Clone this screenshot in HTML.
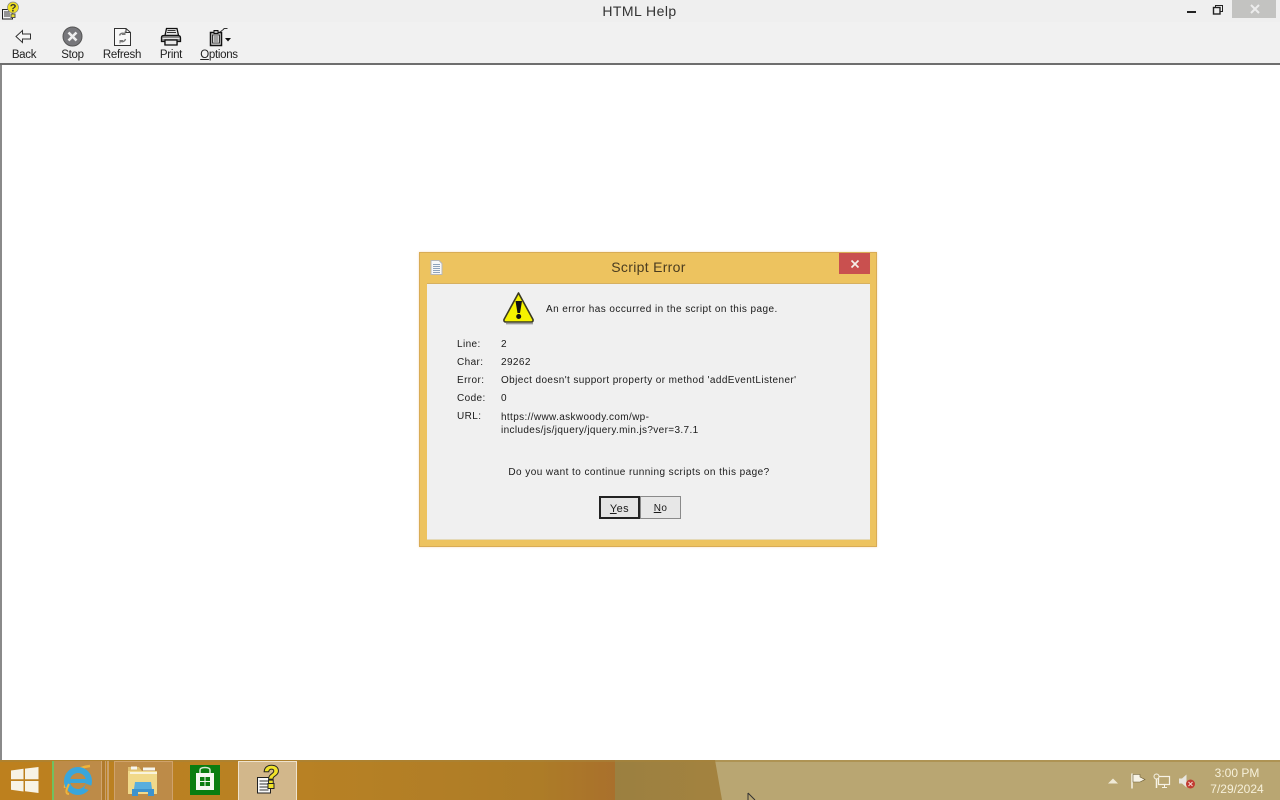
<!DOCTYPE html>
<html><head><meta charset="utf-8"><title>HTML Help</title>
<style>
html,body{margin:0;padding:0;width:1280px;height:800px;overflow:hidden;background:#fff;font-family:"Liberation Sans",Arial,sans-serif;color:#111}
.a{position:absolute;white-space:nowrap}
.t{font-size:11.5px;line-height:14px;color:#222;letter-spacing:-.3px}
.d{font-size:10px;line-height:12px;color:#1a1a1a;letter-spacing:.4px}
u{text-underline-offset:1px}
svg{position:absolute;overflow:visible}
</style></head><body>
<div class="a" style="left:0;top:0;width:1280px;height:22px;background:#efefef"></div>
<div class="a" style="left:0;top:22px;width:1280px;height:42px;background:#f1f1f1"></div>
<div class="a" style="left:0;top:63px;width:1280px;height:2px;background:#6e6e6e"></div>
<div class="a" style="left:0;top:65px;width:2px;height:695px;background:#8a8a8a"></div>
<div class="a" style="left:0;top:3px;width:1279px;text-align:center;font-size:14px;line-height:16px;color:#333;letter-spacing:.45px">HTML Help</div>

<!-- app icon -->
<svg style="left:1px;top:2px" width="18" height="18" viewBox="0 0 18 18">
<rect x="1.500" y="7.500" width="10" height="9.500" fill="#f4f4f4" stroke="#222"/>
<path d="M3 10h6M3 12h6M3 14h6" stroke="#333"/>
<circle cx="12" cy="5.500" r="5.500" fill="#efe020" stroke="#888" stroke-width=".7"/>
<text x="8.800" y="9.500" font-size="11" font-weight="bold" font-family="Liberation Sans" fill="#333">?</text>
<rect x="10" y="12" width="4" height="3.500" fill="#e8df30" stroke="#555"/>
</svg>

<!-- window controls -->
<div class="a" style="left:1187px;top:11px;width:9px;height:2px;background:#222"></div>
<svg style="left:1213px;top:5px" width="10" height="10" viewBox="0 0 10 10"><path d="M2.500 2.500V.5h7v6H7.500" fill="none" stroke="#222"/><rect x=".5" y="2.500" width="6.500" height="6.500" fill="none" stroke="#222" stroke-width="1.400"/></svg>
<div class="a" style="left:1232px;top:0;width:44px;height:18px;background:#c3c3c1"></div>
<svg style="left:1250px;top:4px" width="10" height="10" viewBox="0 0 10 10"><path d="M1 1l8 8M9 1l-8 8" stroke="#ececec" stroke-width="2"/></svg>

<!-- toolbar icons -->
<svg style="left:15px;top:29px" width="17" height="15" viewBox="0 0 17 15"><path d="M1 7.500L7.500 1.500V5H15.500V10H7.500V13.500z" fill="#f6f6f6" stroke="#333"/></svg>
<svg style="left:62px;top:26px" width="21" height="21" viewBox="0 0 21 21"><circle cx="10.500" cy="10.500" r="9.500" fill="#77777b" stroke="#555"/><path d="M6.500 6.500l8 8M14.500 6.500l-8 8" stroke="#eee" stroke-width="2.600"/></svg>
<svg style="left:113px;top:27px" width="19" height="20" viewBox="0 0 19 20"><path d="M1.500 1.500H13L17.500 5.500V18.500H1.500z" fill="#f8f8f8" stroke="#333"/><path d="M13 1.500V5.500H17.500" fill="none" stroke="#333"/><path d="M6.500 8.500a3.500 3.500 0 0 1 5.500-1.500M12.500 12a3.500 3.500 0 0 1-5.500 2" fill="none" stroke="#777" stroke-width="1.400"/><path d="M12 4.500v3h-3M7 16.500v-3h3" fill="none" stroke="#777"/></svg>
<svg style="left:160px;top:27px" width="22" height="20" viewBox="0 0 22 20"><path d="M6.500 1.500H17L18.500 8.500H5z" fill="#e4e4e4" stroke="#111" stroke-width="1.300"/><path d="M7.500 3.500h8M7 5.500h9" stroke="#333"/><path d="M1.500 10.500Q1.500 8.500 4 8.500H18Q20.500 8.500 20.500 11V14.500H17V17.500H5V14.500H1.500z" fill="#8c8c8c" stroke="#111" stroke-width="1.300"/><rect x="5" y="13" width="12" height="5" fill="#e8e8e8" stroke="#111" stroke-width="1.300"/><path d="M2.500 11.500h17" stroke="#e4e4e4"/></svg>
<svg style="left:209px;top:27px" width="23" height="20" viewBox="0 0 23 20"><rect x="1.500" y="5.500" width="11" height="13" fill="#d9d9d9" stroke="#111" stroke-width="1.500"/><rect x="3.500" y="8" width="7" height="8" fill="#fff" stroke="#333"/><path d="M4.500 10h5M4.500 12h5M4.500 14h5" stroke="#444"/><rect x="5" y="3.500" width="4" height="3" fill="#bbb" stroke="#111"/><path d="M11 5l4-3M14.500 1.500h4" stroke="#333"/><path d="M16 11h6l-3 3.500z" fill="#111"/></svg>

<div class="a t" style="left:10px;top:48px;width:28px;text-align:center">Back</div>
<div class="a t" style="left:58px;top:48px;width:29px;text-align:center">Stop</div>
<div class="a t" style="left:102px;top:48px;width:40px;text-align:center">Refresh</div>
<div class="a t" style="left:158px;top:48px;width:26px;text-align:center">Print</div>
<div class="a t" style="left:199px;top:48px;width:40px;text-align:center"><u>O</u>ptions</div>

<!-- dialog -->
<div class="a" style="left:419px;top:252px;width:458px;height:295px;background:#edc35f;box-sizing:border-box;border:1px solid #d9ac55;box-shadow:0 0 2px #f5d9b8"></div>
<div class="a" style="left:427px;top:283px;width:443px;height:257px;background:#f0f0f0;border-top:1px solid #d6b060;box-sizing:border-box"></div>
<div class="a" style="left:427px;top:539px;width:443px;height:1px;background:#e4d9b8"></div>
<svg style="left:430px;top:260px" width="13" height="15" viewBox="0 0 13 15"><path d="M1 .5H9L12 3.500V14.500H1z" fill="#f8f8f8" stroke="#b8b8b8"/><path d="M3 4.500h7M3 6.500h7M3 8.500h7M3 10.500h7M3 12.500h7" stroke="#8fa3bb"/></svg>
<div class="a" style="left:427px;top:259px;width:443px;text-align:center;font-size:14px;line-height:17px;color:#4a3c20;letter-spacing:.3px">Script Error</div>
<div class="a" style="left:839px;top:253px;width:31px;height:21px;background:#c9504f"></div>
<svg style="left:850px;top:259px" width="10" height="10" viewBox="0 0 10 10"><path d="M1.500 1.500l7 7M8.500 1.500l-7 7" stroke="#f6f0ea" stroke-width="1.700"/></svg>

<svg style="left:502px;top:291px" width="34" height="34" viewBox="0 0 34 34">
<path d="M16.500 2L31 28.500Q31.500 31 29 31H4Q1.500 31 2 28.500z" fill="#f5f200" stroke="#3a3a20" stroke-width="1.600" stroke-linejoin="round"/>
<path d="M4 32.500H31" stroke="#9a9a9a" stroke-width="1.800"/>
<path d="M13.500 10h6.500L18 22h-2.500z" fill="#111"/><circle cx="16.700" cy="25.500" r="2.500" fill="#111"/>
</svg>

<div class="a d" style="left:546px;top:302px;letter-spacing:.43px;top:304px">An error has occurred in the script on this page.</div>
<div class="a d" style="left:457px;top:339px">Line:</div><div class="a d" style="left:501px;top:339px">2</div>
<div class="a d" style="left:457px;top:357px">Char:</div><div class="a d" style="left:501px;top:357px">29262</div>
<div class="a d" style="left:457px;top:375px">Error:</div><div class="a d" style="left:501px;top:375px">Object doesn't support property or method 'addEventListener'</div>
<div class="a d" style="left:457px;top:393px">Code:</div><div class="a d" style="left:501px;top:393px">0</div>
<div class="a d" style="left:457px;top:411px">URL:</div>
<div class="a d" style="left:501px;top:411px;line-height:13px;letter-spacing:.36px">https://www.askwoody.com/wp-<br>includes/js/jquery/jquery.min.js?ver=3.7.1</div>
<div class="a d" style="left:427px;top:467px;width:424px;text-align:center;letter-spacing:.44px">Do you want to continue running scripts on this page?</div>

<div class="a d" style="left:599px;top:496px;width:41px;height:23px;box-sizing:border-box;border:2px solid #222;background:#e4e4e4;text-align:center;line-height:22px;font-size:11px"><u>Y</u>es</div>
<div class="a d" style="left:640px;top:496px;width:41px;height:23px;box-sizing:border-box;border:1px solid #8a8a8a;background:#e7e7e7;text-align:center;line-height:24px"><u>N</u>o</div>

<!-- taskbar -->
<div class="a" style="left:0;top:760px;width:1280px;height:40px;background:#b9a672"></div>
<div class="a" style="left:0;top:760px;width:715px;height:40px;background:linear-gradient(90deg,#bd801e 0,#b88124 300px,#ad7c27 540px,#a9702c 615px,#9b8040 615px,#a3823f 715px)"></div>
<div class="a" style="left:0;top:760px;width:1280px;height:2px;background:#a6833b;opacity:.55"></div>
<svg style="left:715px;top:760px" width="8" height="40" viewBox="0 0 8 40"><path d="M0 0L7 40H0z" fill="#a3823f"/></svg>
<svg style="left:745px;top:792px" width="12" height="8" viewBox="0 0 12 8"><path d="M3 1V8M3 1L10 8" stroke="#333" fill="#eee"/></svg>

<!-- start -->
<svg style="left:11px;top:767px" width="28" height="26" viewBox="0 0 28 26"><path d="M0 3.500L12.500 1.800V12.300H0zM14 1.600L27.500 0V12.300H14zM0 14H12.500V24.500L0 22.800zM14 14H27.500V26L14 24.300z" fill="#f7f3e6"/></svg>
<!-- IE -->
<div class="a" style="left:52px;top:761px;width:50px;height:39px;background:#bd8b48;border-left:2px solid #70c060;box-sizing:border-box;border-right:1px solid #d0a56f"></div>
<div class="a" style="left:102px;top:761px;width:3px;height:39px;background:#b07a2c;border-right:1px solid #c9a06c"></div>
<div class="a" style="left:107px;top:761px;width:2px;height:39px;background:#c9a06c"></div>
<svg style="left:61px;top:763px" width="34" height="34" viewBox="0 0 34 34">
<path d="M4 25C4 13 17 4 29 3" fill="none" stroke="#f0b33a" stroke-width="2.500"/>
<circle cx="17" cy="18" r="11" fill="none" stroke="#39a6dc" stroke-width="6"/>
<path d="M7 18H28" stroke="#39a6dc" stroke-width="4"/>
<path d="M24 23L32 26" stroke="#bd8b48" stroke-width="5"/>
<path d="M8 21C5 27 4 31 8 31" fill="none" stroke="#f0b33a" stroke-width="2"/>
</svg>
<!-- explorer -->
<div class="a" style="left:114px;top:761px;width:59px;height:39px;background:#bd8b48;border:1px solid #cfa26c;border-bottom:none;box-sizing:border-box"></div>
<svg style="left:127px;top:766px" width="32" height="30" viewBox="0 0 32 30">
<path d="M1 5H30V28H1z" fill="#f1d98a"/><path d="M1 1H12L15 5H1z" fill="#e0c070"/>
<path d="M4 2h6M16 3h12" stroke="#f6f6ee" stroke-width="3"/>
<path d="M3 7h27" stroke="#f9f3dc" stroke-width="2"/>
<path d="M8 16H24L25 23H7z" fill="#59aede"/><path d="M5 23H27V30H21V26H11V30H5z" fill="#3d93ce"/>
</svg>
<!-- store -->
<svg style="left:190px;top:765px" width="30" height="30" viewBox="0 0 30 30">
<rect width="30" height="30" fill="#0a7d10"/>
<path d="M10 8V5Q10 2.500 15 2.500T20 5V8" fill="none" stroke="#d4e8d0" stroke-width="1.500"/>
<path d="M6 8H24V25H6z" fill="#f5f8f2"/>
<path d="M10 12H14.500V16H10zM15.500 12H20V16H15.500zM10 17H14.500V21H10zM15.500 17H20V21H15.500z" fill="#0a7d10"/>
</svg>
<!-- help -->
<div class="a" style="left:238px;top:761px;width:59px;height:39px;background:#d2b78b;border:1px solid #efe3cd;border-bottom:none;box-sizing:border-box"></div>
<svg style="left:255px;top:765px" width="26" height="30" viewBox="0 0 26 30">
<rect x="2.500" y="12.500" width="13" height="15.500" fill="#f8f8f8" stroke="#222"/>
<path d="M4.500 16h9M4.500 19h9M4.500 22h9M4.500 25h9" stroke="#333"/>
<text x="8.500" y="19" font-size="26" font-weight="bold" font-family="Liberation Sans" fill="#f0e22a" stroke="#222" stroke-width="2" paint-order="stroke">?</text>
<rect x="13" y="18.500" width="6" height="5" fill="#f0e22a" stroke="#222"/>
</svg>

<!-- tray -->
<svg style="left:1108px;top:778px" width="10" height="6" viewBox="0 0 10 6"><path d="M0 5.500L5 .5 10 5.500z" fill="#f0ead8"/></svg>
<svg style="left:1130px;top:773px" width="16" height="16" viewBox="0 0 16 16"><path d="M2 .5V15.500" stroke="#f7f3e6" stroke-width="1.500"/><path d="M3 1.500H10V4L15 6.500 10 9H3z" fill="#f7f3e6" stroke="#6b5c36" stroke-width=".6"/></svg>
<svg style="left:1153px;top:773px" width="17" height="17" viewBox="0 0 17 17"><rect x="5.500" y="3.500" width="11" height="8" fill="none" stroke="#f7f3e6" stroke-width="1.200"/><path d="M9 14.500h5M11.500 11.500v3" stroke="#f7f3e6"/><circle cx="3.500" cy="3.500" r="2.500" fill="#b9a672" stroke="#f7f3e6"/><path d="M3.500 6v9" stroke="#f7f3e6" stroke-width="1.500"/></svg>
<svg style="left:1178px;top:773px" width="18" height="17" viewBox="0 0 18 17"><path d="M1 5.500H4L8.500 1.500V14.500L4 10.500H1z" fill="#e8e6e0"/><circle cx="12.500" cy="11" r="4.500" fill="#c23b32"/><path d="M10.500 9l4 4M14.500 9l-4 4" stroke="#f4d8d0"/></svg>
<div class="a" style="left:1204px;top:765px;width:66px;text-align:center;font-size:12px;line-height:16px;color:#f6f0da">3:00 PM<br>7/29/2024</div>
</body></html>
